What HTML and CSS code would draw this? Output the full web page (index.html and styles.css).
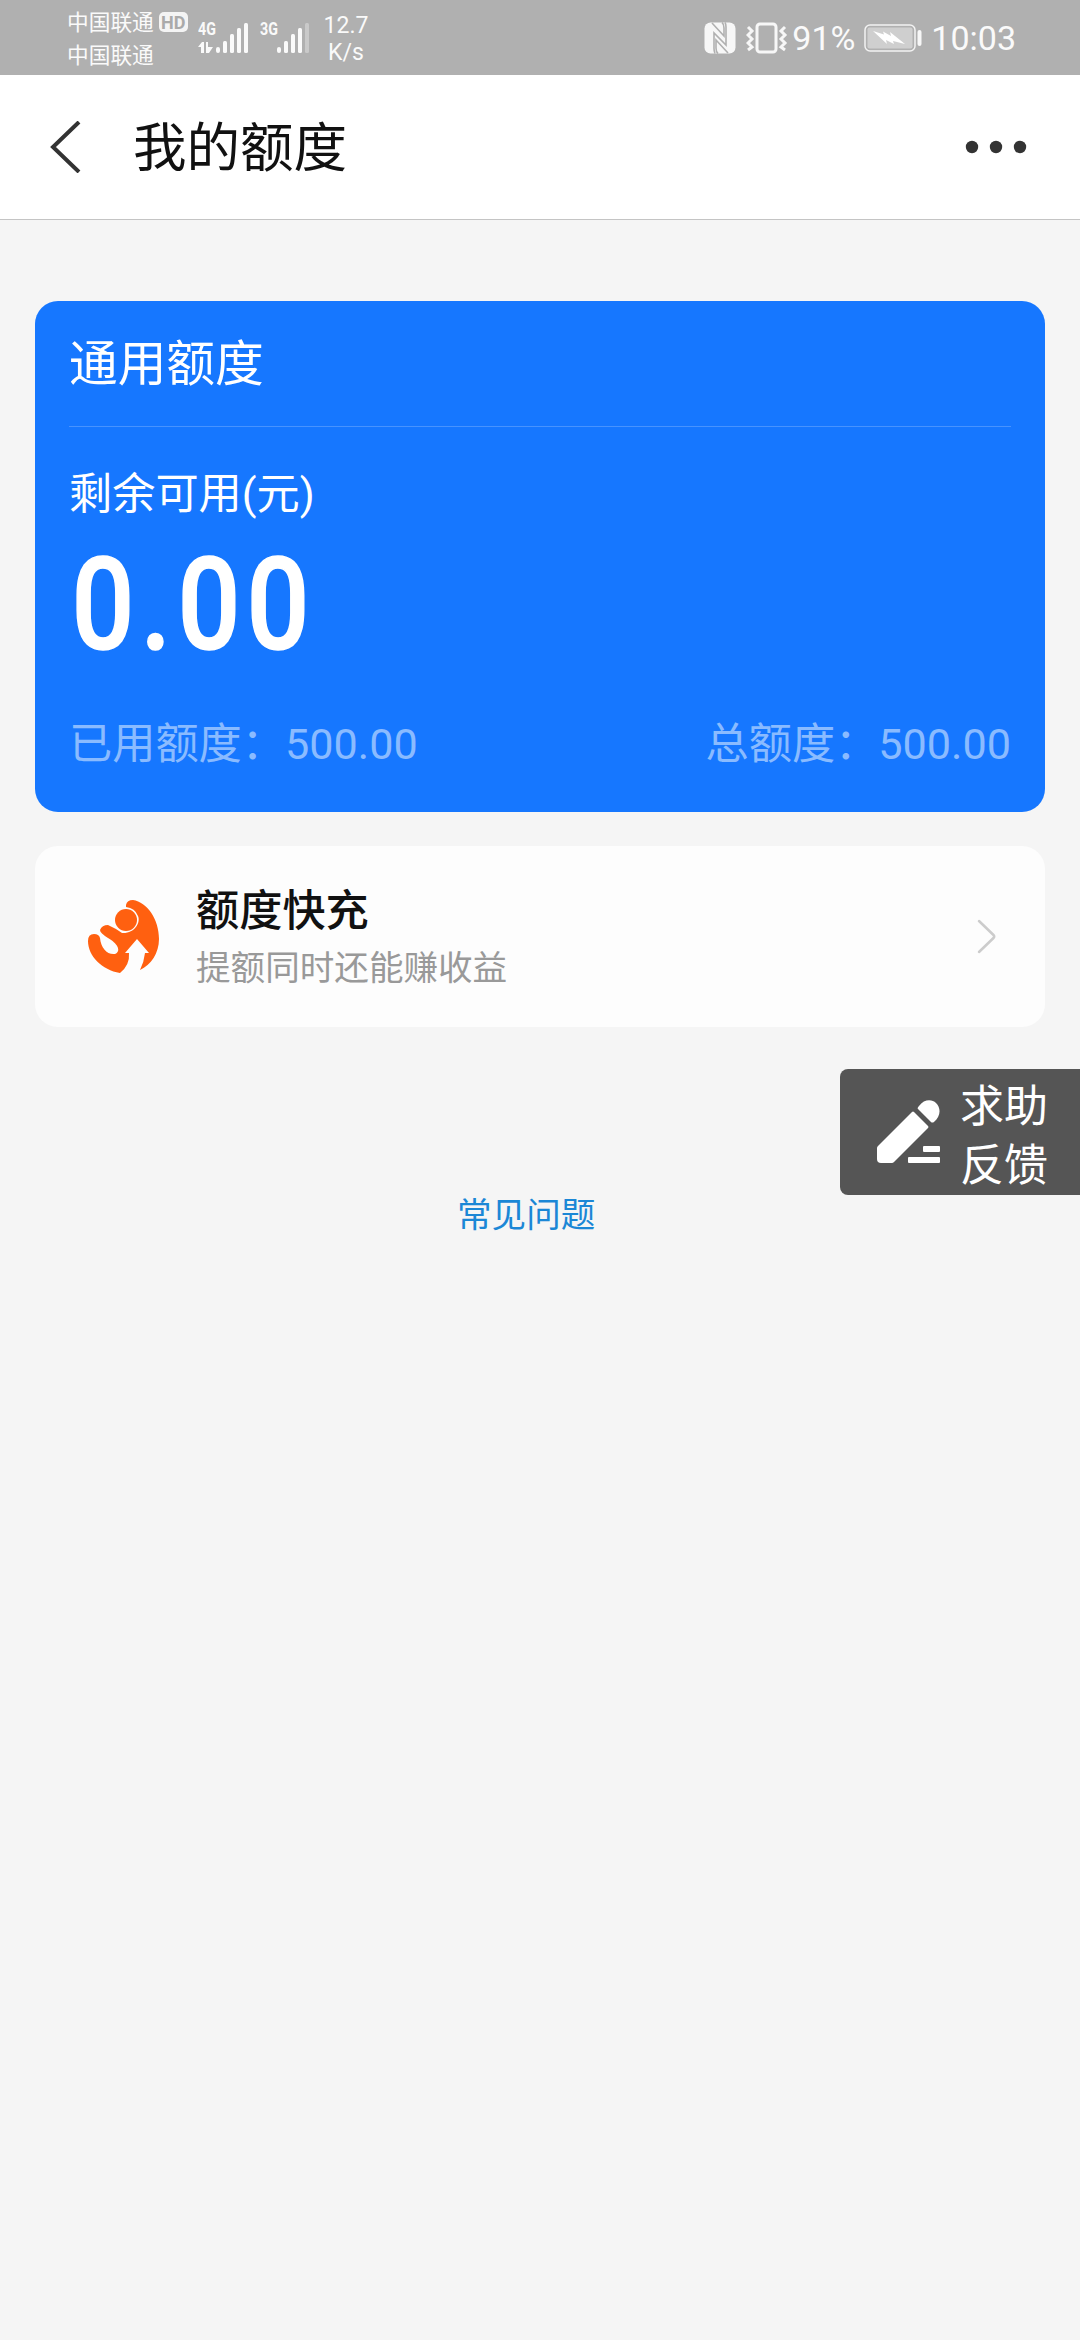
FILE: index.html
```html
<!DOCTYPE html>
<html lang="zh-CN">
<head>
    <meta charset="UTF-8">
    <meta name="viewport" content="width=device-width, initial-scale=1.0">
    <title>我的额度</title>
    <link rel="stylesheet" href="styles.css">
</head>
<body>

<!-- 状态栏 -->
<div class="status-bar">
    <div class="carriers">
        <div class="carrier">中国联通<span class="hd">HD</span></div>
        <div class="carrier">中国联通</div>
    </div>
    <div class="signal">
        <span class="net">4G</span>
        <svg width="52" height="32" viewBox="0 0 52 32" fill="#fafafa">
            <path d="M0 25l4-5h2v11H3v-6zM8 20h2v5h5l-4 6H8z"/>
            <rect x="18" y="25" width="4" height="6" rx="2"/>
            <rect x="25" y="19" width="4" height="12" rx="1.5"/>
            <rect x="32" y="12" width="4" height="19" rx="1.5"/>
            <rect x="39" y="6" width="4" height="25" rx="1.5"/>
            <rect x="46" y="1" width="4" height="30" rx="1.5"/>
        </svg>
    </div>
    <div class="signal signal-3g">
        <span class="net">3G</span>
        <svg width="52" height="32" viewBox="0 0 52 32" fill="#fafafa">
            <rect x="17" y="25" width="4" height="6" rx="2"/>
            <rect x="24" y="19" width="4" height="12" rx="1.5"/>
            <rect x="31" y="12" width="4" height="19" rx="1.5"/>
            <rect x="38" y="6" width="4" height="25" rx="1.5"/>
            <rect x="45" y="1" width="4" height="30" rx="1.5" opacity=".35"/>
        </svg>
    </div>
    <div class="speed">12.7<br>K/s</div>
    <div class="status-right">
        <svg class="nfc" width="32" height="32" viewBox="0 0 32 32">
            <rect x=".5" y=".5" width="31" height="31" rx="6" fill="#f7f7f7"/>
            <path d="M8 1l12 13V6q0-4-2-5.500M24 31L12 18v8q0 4 2 5.500M11 31.500q-1-2-1-5V11l12 12V5q0-3-1-4.500" fill="none" stroke="#b0b0b0" stroke-width="1.600"/>
        </svg>
        <svg class="vibrate" width="42" height="32" viewBox="0 0 42 32" fill="none" stroke="#f7f7f7" stroke-width="3">
            <rect x="11" y="2" width="19" height="28" rx="3"/>
            <path d="M2 5l4 4-4 4 4 4-4 4 4 4-4 3M39 5l-4 4 4 4-4 4 4 4-4 4 4 3"/>
        </svg>
        <span class="percent">91%</span>
        <svg class="battery" width="60" height="28" viewBox="0 0 60 28">
            <rect x="1" y="1" width="50" height="26" rx="5" fill="none" stroke="#f2f2f2" stroke-width="1.500"/>
            <rect x="3.500" y="3.500" width="45" height="21" rx="2" fill="#cfcfcf"/>
            <path d="M9 7l11 3.500-1-3 8 4.500-1-4 15 12-12-3 1 3-8-4 1 4z" fill="#fff"/>
            <rect x="53.500" y="6" width="4" height="16" rx="2" fill="#f7f7f7"/>
        </svg>
        <span class="time">10:03</span>
    </div>
</div>

<!-- 标题栏 -->
<div class="header">
    <svg class="back" width="34" height="52" viewBox="0 0 34 52" fill="none" stroke="#333" stroke-width="4">
        <path d="M31 1L5 26l26 25"/>
    </svg>
    <h1>我的额度</h1>
    <svg class="more" width="62" height="14" viewBox="0 0 62 14" fill="#333">
        <circle cx="7" cy="7" r="6.200"/>
        <circle cx="31" cy="7" r="6.200"/>
        <circle cx="55" cy="7" r="6.200"/>
    </svg>
</div>

<div class="container">
    <div class="quota-card">
        <h2>通用额度</h2>
        <div class="quota-label">剩余可用(元)</div>
        <div class="quota-amount">0.00</div>
        <div class="quota-detail">
            <span>已用额度：500.00</span>
            <span>总额度：500.00</span>
        </div>
    </div>

    <div class="boost-card">
        <svg class="boost-icon" width="72" height="74" viewBox="0 0 72 74">
            <g fill="#ff6010">
                <circle cx="38" cy="20" r="11"/>
                <path d="M38 7V5Q39 0 45 0C59 2 71 19 71 39C71 53 63 65 52 70Q56 62 57 53H61L49 39L37 53H41Q42 65 32 73C14 70 0 56 0 41Q0 34 6 34Q11 34 12 38C13 48 19 55 27 54C34 51 29 43 20 38Q12 33 12 30Q14 25 20 25Q27 28 34 33C46 34 53 23 50 16Q47 8 38 7z"/>
            </g>
        </svg>
        <div class="boost-text">
            <h3>额度快充</h3>
            <p>提额同时还能赚收益</p>
        </div>
        <svg class="arrow" width="20" height="36" viewBox="0 0 20 36" fill="none" stroke="#ccc" stroke-width="2.500" stroke-linecap="round" stroke-linejoin="round">
            <path d="M2 2l14.500 14q1.500 1.500 0 3L2 33"/>
        </svg>
    </div>

    <a class="faq" href="#">常见问题</a>
</div>

<!-- 悬浮的求助反馈按钮 -->
<div class="feedback">
    <svg width="64" height="64" viewBox="0 0 64 64" fill="#fff">
        <path d="M37 1L51 15Q52 16 51 17L17 51Q16 52 15 52H4Q0 52 0 48V37Q0 36 1 35L35 1Q36 0 37 1z" transform="translate(0 11)"/>
        <path d="M42 6C47-1 55-1 59 3C64 8 64 16 57 22Q55 23 54 22L41 9Q40 8 42 6z"/>
        <rect x="46" y="46" width="17" height="6" rx="1"/>
        <rect x="31" y="57" width="32" height="6" rx="1"/>
    </svg>
    <span>求助<br>反馈</span>
</div>

</body>
</html>
```
FILE: styles.css
```css
body {
    font-family: Roboto, "Noto Sans CJK SC", sans-serif;
    background-color: #f5f5f5;
    margin: 0;
    min-height: 100vh;
    color: #111;
}
h1, h2, h3, p {
    margin: 0;
    font-weight: 400;
}
svg {
    display: block;
    flex-shrink: 0;
}
.status-bar {
    display: flex;
    align-items: center;
    height: 75px;
    padding: 0 64px 0 67px;
    box-sizing: border-box;
    background-color: #b0b0b0;
    color: #fafafa;
}
.carriers {
    width: 131px;
    padding-top: 2px;
}
.carrier {
    display: flex;
    align-items: center;
    height: 33px;
    font-size: 21.7px;
    line-height: 33px;
}
.hd {
    width: 29px;
    height: 20px;
    margin-left: 5px;
    border-radius: 5px;
    background-color: #f4f4f4;
    color: #aaa;
    font-size: 18px;
    font-weight: 700;
    line-height: 21px;
    text-align: center;
}
.signal {
    position: relative;
    width: 62px;
}
.signal-3g {
    width: 59px;
}
.net {
    position: absolute;
    top: -4px;
    left: 0;
    font-size: 19px;
    font-weight: 700;
    line-height: 22px;
    transform: scaleX(0.75);
    transform-origin: left;
}
.speed {
    width: 54px;
    padding-top: 2px;
    font-size: 23px;
    line-height: 27px;
    text-align: center;
}
.status-right {
    display: flex;
    align-items: center;
    margin-left: auto;
    font-size: 34px;
}
.vibrate {
    margin-left: 10px;
}
.percent {
    width: 66px;
    margin-left: 4px;
}
.battery {
    margin-left: 6px;
}
.time {
    margin-left: 7px;
}
.header {
    display: flex;
    align-items: center;
    height: 145px;
    padding: 0 53px 0 48px;
    box-sizing: border-box;
    border-bottom: 1px solid #c4c4c4;
    background-color: #fff;
}
.header h1 {
    margin-left: 51px;
    padding-bottom: 8px;
    font-size: 53.5px;
}
.more {
    margin-left: auto;
}
.container {
    padding: 81px 35px 0;
}
.quota-card {
    height: 511px;
    padding: 0 34px;
    box-sizing: border-box;
    border-radius: 23px;
    background-color: #1677ff;
    color: #fff;
}
.quota-card h2 {
    height: 125px;
    border-bottom: 1px solid #4793ff;
    font-size: 48.7px;
    line-height: 128px;
}
.quota-label {
    padding-top: 37px;
    font-size: 43.2px;
    line-height: 62px;
}
/* 压窄数字，接近 DIN 字形 */
.quota-amount {
    height: 158px;
    padding-left: 3px;
    font-size: 128px;
    font-weight: 500;
    line-height: 159px;
    letter-spacing: 7px;
    transform: scaleX(0.865);
    transform-origin: left;
    -webkit-text-stroke: 1.5px #fff;
}
.quota-detail {
    display: flex;
    justify-content: space-between;
    color: #8abbff;
    font-size: 43.2px;
    line-height: 121px;
}
.boost-card {
    display: flex;
    align-items: center;
    height: 181px;
    margin-top: 34px;
    padding: 0 48px 0 53px;
    box-sizing: border-box;
    border-radius: 23px;
    background-color: #fdfdfd;
}
.boost-text {
    margin-left: 36px;
}
.boost-text h3 {
    font-size: 43.2px;
    font-weight: 500;
    line-height: 62px;
}
.boost-text p {
    color: #999;
    font-size: 34.6px;
    line-height: 50px;
}
.arrow {
    margin-left: auto;
}
.faq {
    display: block;
    width: 140px;
    margin: 163px auto 0 422px;
    color: #1b87d6;
    font-size: 34.6px;
    line-height: 50px;
    text-decoration: none;
}
.feedback {
    position: absolute;
    top: 1069px;
    right: 0;
    display: flex;
    align-items: center;
    width: 240px;
    height: 126px;
    padding-left: 37px;
    box-sizing: border-box;
    border-radius: 8px 0 0 8px;
    background-color: #555;
    color: #fff;
}
.feedback span {
    margin-left: 19px;
    padding-top: 9px;
    font-size: 44px;
    line-height: 59px;
}
```
